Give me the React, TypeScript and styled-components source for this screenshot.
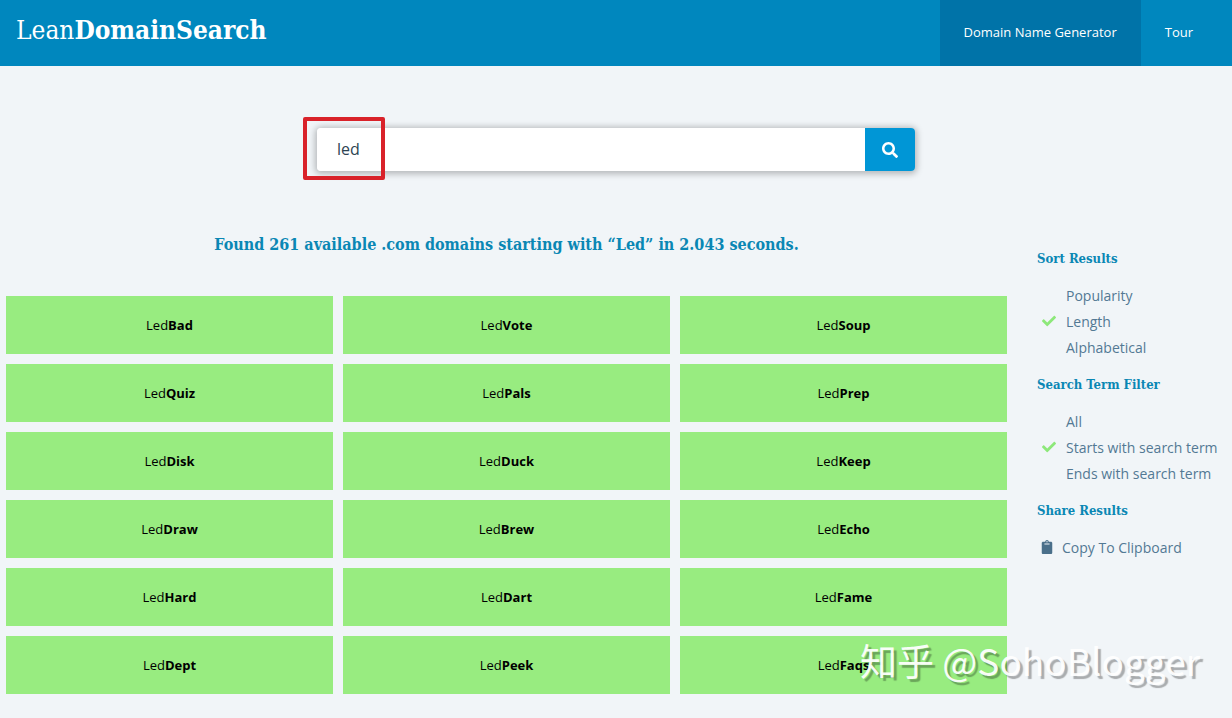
import React, { useState } from 'react';
import styled, { createGlobalStyle } from 'styled-components';
import { FaCheck, FaClipboard, FaSearch } from 'react-icons/fa';

const serif = '"DejaVu Serif Condensed", "DejaVu Serif", serif';
const sans = '"Open Sans", "Noto Sans", sans-serif';

const GlobalStyle = createGlobalStyle`
  *, *::before, *::after { box-sizing: border-box; }
  body {
    margin: 0;
    background: #f1f5f8;
    color: #000;
    font-family: ${sans};
    font-size: 14px;
  }
`;

const Page = styled.div`
  position: relative;
  overflow-x: hidden;
  padding-bottom: 24px;
`;

const Header = styled.header`
  display: flex;
  justify-content: space-between;
  height: 66px;
  padding: 0 15px 0 16px;
  background: #0087be;
`;

const Logo = styled.a`
  padding-top: 12px;
  color: #fff;
  font-family: ${serif};
  font-size: 26px;
  line-height: 36px;
  text-decoration: none;
`;

const Nav = styled.nav`
  display: flex;
`;

const NavLink = styled.a<{ $active?: boolean }>`
  display: flex;
  align-items: center;
  padding: 0 24px 2px;
  background: ${(p) => (p.$active ? '#0073a8' : 'transparent')};
  color: #fff;
  font-size: 13px;
  text-decoration: none;
`;

const SearchForm = styled.form`
  position: relative;
  display: flex;
  width: 598px;
  max-width: 90%;
  height: 43px;
  margin: 62px auto 0;
  border-radius: 4px;
  box-shadow: 0 1px 6px 2px rgba(0, 0, 0, 0.25);
`;

const SearchInput = styled.input`
  flex: 1;
  min-width: 0;
  padding: 0 20px 2px;
  border: 0;
  border-radius: 4px 0 0 4px;
  outline: 0;
  background: #fff;
  color: #2e4453;
  font-family: ${sans};
  font-size: 16px;
`;

const SearchButton = styled.button`
  display: flex;
  align-items: center;
  justify-content: center;
  width: 50px;
  padding: 0;
  border: 0;
  border-radius: 0 4px 4px 0;
  background: #0096d6;
  color: #fff;
  font-size: 16px;
`;

const Highlight = styled.div`
  position: absolute;
  top: -11px;
  left: -14px;
  width: 82px;
  height: 63px;
  border: 4px solid #d9222a;
  border-radius: 2px;
  pointer-events: none;
`;

const Content = styled.div`
  display: grid;
  grid-template-columns: minmax(0, 1fr) 195px;
  column-gap: 30px;
  padding-left: 6px;
`;

const Results = styled.main`
  padding-top: 61px;
`;

const Summary = styled.h1`
  margin: 0 0 38px;
  color: #0a87b4;
  font-family: ${serif};
  font-size: 16px;
  line-height: 26px;
  text-align: center;
`;

const Domains = styled.div`
  display: grid;
  grid-template-columns: repeat(3, minmax(0, 1fr));
  gap: 10px;
`;

const Domain = styled.button`
  height: 58px;
  padding: 0;
  border: 0;
  background: #98ec80;
  color: #000;
  font-family: ${sans};
  font-size: 13px;
`;

const Sidebar = styled.aside`
  padding-top: 75px;
`;

const Group = styled.fieldset`
  min-width: 0;
  margin: 0 0 12px;
  padding: 0;
  border: 0;
`;

const GroupTitle = styled.legend`
  margin-bottom: 10px;
  padding: 0;
  color: #0a87b4;
  font-family: ${serif};
  font-size: 13px;
  font-weight: bold;
  line-height: 26px;
`;

const Option = styled.label`
  position: relative;
  display: flex;
  align-items: center;
  height: 26px;
  padding-left: 5px;
  color: #537994;
  font-size: 14px;
  white-space: nowrap;
`;

const Radio = styled.input`
  width: 14px;
  height: 14px;
  margin: 0 10px 0 0;
  appearance: none;
`;

const Tick = styled(FaCheck)`
  position: absolute;
  left: 5px;
  color: #8de87a;
  font-size: 14px;
  pointer-events: none;
`;

const CopyButton = styled.button`
  display: flex;
  align-items: center;
  gap: 8px;
  height: 26px;
  padding: 0 0 0 3px;
  border: 0;
  background: none;
  color: #537994;
  font-family: ${sans};
  font-size: 14px;

  svg { color: #4a6f8a; }
`;

const Watermark = styled.div`
  position: absolute;
  top: 632px;
  right: 32px;
  color: rgba(255, 255, 255, 0.95);
  font-family: "Noto Sans CJK SC", sans-serif;
  font-size: 37px;
  line-height: 56px;
  text-shadow: 3px 3px 1px rgba(0, 0, 0, 0.3);
  white-space: nowrap;
  pointer-events: none;
`;

const endings = [
  'Bad', 'Vote', 'Soup',
  'Quiz', 'Pals', 'Prep',
  'Disk', 'Duck', 'Keep',
  'Draw', 'Brew', 'Echo',
  'Hard', 'Dart', 'Fame',
  'Dept', 'Peek', 'Faqs',
];

interface OptionGroupProps {
  title: string;
  name: string;
  options: string[];
  initial: string;
}

function OptionGroup({ title, name, options, initial }: OptionGroupProps) {
  const [selected, setSelected] = useState(initial);
  return (
    <Group>
      <GroupTitle>{title}</GroupTitle>
      {options.map((option) => (
        <Option key={option}>
          <Radio
            type="radio"
            name={name}
            checked={selected === option}
            onChange={() => setSelected(option)}
          />
          {selected === option && <Tick aria-hidden />}
          {option}
        </Option>
      ))}
    </Group>
  );
}

export default function App() {
  const [term, setTerm] = useState('led');
  return (
    <Page>
      <GlobalStyle />
      <Header>
        <Logo href="#">Lean<b>DomainSearch</b></Logo>
        <Nav>
          <NavLink href="#generator" $active>Domain Name Generator</NavLink>
          <NavLink href="#tour">Tour</NavLink>
        </Nav>
      </Header>
      <SearchForm onSubmit={(e) => e.preventDefault()}>
        <SearchInput
          aria-label="Search term"
          value={term}
          onChange={(e) => setTerm(e.target.value)}
        />
        <SearchButton type="submit" aria-label="Search"><FaSearch /></SearchButton>
        <Highlight />
      </SearchForm>
      <Content>
        <Results>
          <Summary>Found 261 available .com domains starting with “Led” in 2.043 seconds.</Summary>
          <Domains>
            {endings.map((ending) => (
              <Domain key={ending} type="button">Led<b>{ending}</b></Domain>
            ))}
          </Domains>
        </Results>
        <Sidebar>
          <OptionGroup
            title="Sort Results"
            name="sort"
            options={['Popularity', 'Length', 'Alphabetical']}
            initial="Length"
          />
          <OptionGroup
            title="Search Term Filter"
            name="filter"
            options={['All', 'Starts with search term', 'Ends with search term']}
            initial="Starts with search term"
          />
          <Group>
            <GroupTitle>Share Results</GroupTitle>
            <CopyButton type="button"><FaClipboard aria-hidden />Copy To Clipboard</CopyButton>
          </Group>
        </Sidebar>
      </Content>
      <Watermark>知乎 @SohoBlogger</Watermark>
    </Page>
  );
}
